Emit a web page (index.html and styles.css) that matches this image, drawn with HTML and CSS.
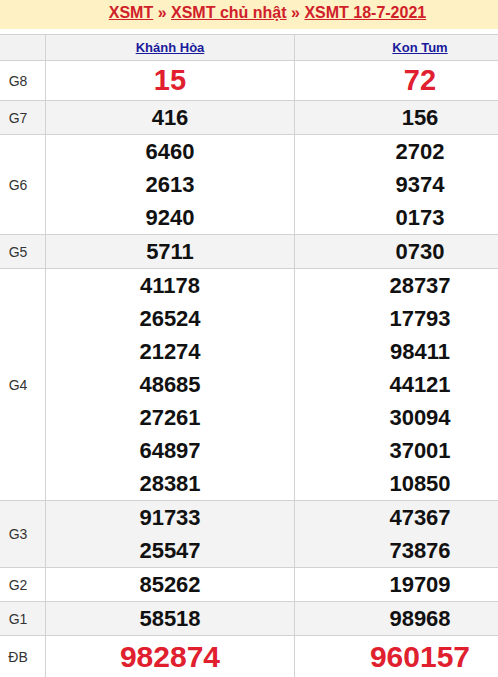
FILE: index.html
```html
<!DOCTYPE html>
<html>
<head>
<meta charset="utf-8">
<link rel="stylesheet" href="styles.css">
</head>
<body>
<div class="viewport">
<div class="page">
  <div class="crumbs">
    <a href="#">XSMT</a> » <a href="#">XSMT chủ nhật</a> » <a href="#">XSMT 18-7-2021</a>
  </div>
  <table class="results">
    <colgroup><col class="c-label"><col class="c-prov"><col class="c-prov2"></colgroup>
    <tr class="head">
      <td></td>
      <td><a href="#">Khánh Hòa</a></td>
      <td><a href="#">Kon Tum</a></td>
    </tr>
    <tr class="g8">
      <td class="lbl">G8</td>
      <td><div class="n">15</div></td>
      <td><div class="n">72</div></td>
    </tr>
    <tr class="alt">
      <td class="lbl">G7</td>
      <td><div class="n">416</div></td>
      <td><div class="n">156</div></td>
    </tr>
    <tr>
      <td class="lbl">G6</td>
      <td><div class="n">6460</div><div class="n">2613</div><div class="n">9240</div></td>
      <td><div class="n">2702</div><div class="n">9374</div><div class="n">0173</div></td>
    </tr>
    <tr class="alt">
      <td class="lbl">G5</td>
      <td><div class="n">5711</div></td>
      <td><div class="n">0730</div></td>
    </tr>
    <tr>
      <td class="lbl">G4</td>
      <td><div class="n">41178</div><div class="n">26524</div><div class="n">21274</div><div class="n">48685</div><div class="n">27261</div><div class="n">64897</div><div class="n">28381</div></td>
      <td><div class="n">28737</div><div class="n">17793</div><div class="n">98411</div><div class="n">44121</div><div class="n">30094</div><div class="n">37001</div><div class="n">10850</div></td>
    </tr>
    <tr class="alt">
      <td class="lbl">G3</td>
      <td><div class="n">91733</div><div class="n">25547</div></td>
      <td><div class="n">47367</div><div class="n">73876</div></td>
    </tr>
    <tr>
      <td class="lbl">G2</td>
      <td><div class="n">85262</div></td>
      <td><div class="n">19709</div></td>
    </tr>
    <tr class="alt">
      <td class="lbl">G1</td>
      <td><div class="n">58518</div></td>
      <td><div class="n">98968</div></td>
    </tr>
    <tr class="db">
      <td class="lbl">ĐB</td>
      <td><div class="n">982874</div></td>
      <td><div class="n">960157</div></td>
    </tr>
  </table>
</div>
</div>
</body>
</html>
```
FILE: styles.css
```css
html, body {
  margin: 0;
  padding: 0;
  overflow: hidden;
  background: #fff;
}
.viewport {
  width: 498px;
  overflow: hidden;
}
.page {
  width: 555px;
  margin-left: -10px;
  font-family: "Liberation Sans", Arial, sans-serif;
}
.crumbs {
  background: #fef1c4;
  height: 29px;
  line-height: 25px;
  text-align: center;
  font-weight: bold;
  font-size: 16px;
  color: #d0202a;
  margin-bottom: 5px;
}
.crumbs a {
  color: #d0202a;
  text-decoration: underline;
}
.results {
  width: 555px;
  border-collapse: collapse;
  table-layout: fixed;
}
.c-label { width: 55px; }
.c-prov { width: 249px; }
.c-prov2 { width: 251px; }
.results td {
  border: 1px solid #d2d2d2;
  padding: 0;
  text-align: center;
  vertical-align: middle;
}
.head td {
  background: #f2f2f2;
  height: 25px;
  font-size: 13px;
  font-weight: bold;
}
.head a {
  color: #1a1a9c;
  text-decoration: underline;
}
.alt td {
  background: #f3f3f3;
}
.lbl {
  font-size: 14px;
  color: #333;
}
.n {
  font-size: 22px;
  font-weight: bold;
  line-height: 33px;
  color: #111;
}
.g8 .n {
  font-size: 29px;
  line-height: 39px;
  color: #e0202e;
}
.db .n {
  font-size: 30px;
  line-height: 42px;
  color: #e0202e;
}
```
